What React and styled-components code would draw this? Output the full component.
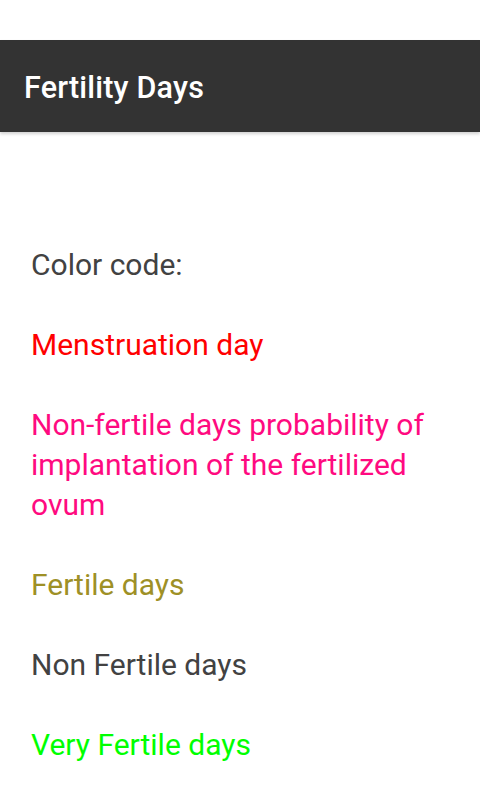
import styled, {createGlobalStyle} from "styled-components";

const GlobalStyle = createGlobalStyle`
  html, body {
    margin: 0;
    padding: 0;
    background: #ffffff;
  }
  body {
    font-family: Roboto, "Noto Sans", sans-serif;
  }
`;

const Screen = styled.div`
  width: 480px;
  height: 800px;
  background: #ffffff;
  display: flex;
  flex-direction: column;
  overflow: hidden;
`;

const StatusSpace = styled.div`
  height: 40px;
  background: #ffffff;
`;

const Toolbar = styled.div`
  height: 92px;
  background: #333333;
  display: flex;
  align-items: center;
  padding: 2px 24px 0 24px;
  box-sizing: border-box;
  box-shadow: 0 2px 3px rgba(0, 0, 0, 0.18);
  position: relative;
  z-index: 1;
`;

const Title = styled.h1`
  margin: 0;
  color: #ffffff;
  font-size: 30.5px;
  font-weight: 500;
  letter-spacing: 0.2px;
`;

const Content = styled.div`
  padding: 113px 31px 0 31px;
  display: flex;
  flex-direction: column;
  gap: 40px;
`;

const Line = styled.p`
  margin: 0;
  font-size: 30px;
  line-height: 40px;
  color: ${(p) => p.color || "#424242"};
`;

const codes = [
    {text: "Color code:", color: "#424242"},
    {text: "Menstruation day", color: "#ff0000"},
    {text: "Non-fertile days probability of implantation of the fertilized ovum", color: "#ff0a80"},
    {text: "Fertile days", color: "#9e9026"},
    {text: "Non Fertile days", color: "#424242"},
    {text: "Very Fertile days", color: "#00ff00"},
];

const App = () => {
    return (
        <Screen>
            <GlobalStyle/>
            <StatusSpace/>
            <Toolbar>
                <Title>Fertility Days</Title>
            </Toolbar>
            <Content>
                {codes.map((c) => (
                    <Line key={c.text} color={c.color}>{c.text}</Line>
                ))}
            </Content>
        </Screen>
    );
};

export default App;
